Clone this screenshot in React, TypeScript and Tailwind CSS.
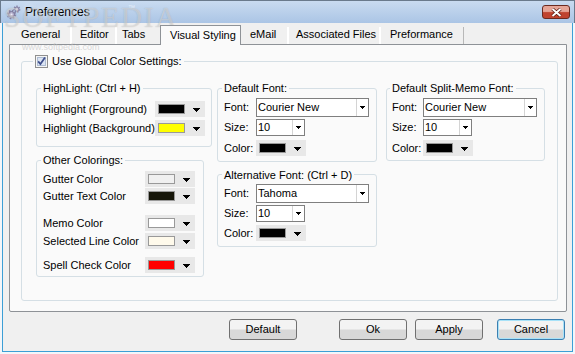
import * as React from "react"

const GROUP = "rounded-[3px] border border-[#d5dfe5]"

const DropArrow = () => (
  <svg width="7" height="4" viewBox="0 0 7 4" className="block">
    <path d="M0 0h7v1h-1v1h-1v1h-1v1h-1v-1h-1v-1h-1v-1h-1z" fill="#000" />
  </svg>
)

const ComboArrow = () => (
  <svg width="5" height="3" viewBox="0 0 5 3" className="block">
    <path d="M0 0h5v1h-1v1h-1v1h-1v-1h-1v-1h-1z" fill="#000" />
  </svg>
)

const ColorPick = ({ swatch }: { swatch: string }) => (
  <div className="flex h-[16px] w-[50px] shrink-0 items-start bg-[#e8e8e8]">
    <div className={`mt-[3px] ml-[3px] h-[10px] w-[27px] border border-[#999999] ${swatch}`} />
    <div className="mt-[7px] ml-[8px]">
      <DropArrow />
    </div>
  </div>
)

const Combo = ({ value, size }: { value: string; size: string }) => (
  <div className={`flex shrink-0 border border-[#7f7f7f] bg-white ${size}`}>
    <span className="flex flex-1 items-center pl-[1px] leading-[13px]">{value}</span>
    <span className="flex w-[12px] items-center justify-center border-l border-[#d4d4d4]">
      <ComboArrow />
    </span>
  </div>
)

type FontBoxProps = {
  title: string
  font: string
  box: string
  label: string
  combo: string
  gaps: [string, string, string]
}

const FontBox = ({ title, font, box, label, combo, gaps }: FontBoxProps) => (
  <fieldset className={`${GROUP} ${box}`}>
    <legend className="px-[2px] leading-[14px]">{title}</legend>
    <div className="pl-[2px]">
      <div className={`flex items-center ${gaps[0]}`}>
        <span className={label}>Font:</span>
        <Combo value={font} size={combo} />
      </div>
      <div className={`flex items-center ${gaps[1]}`}>
        <span className={label}>Size:</span>
        <Combo value="10" size="h-[17px] w-[49px]" />
      </div>
      <div className={`flex items-center ${gaps[2]}`}>
        <span className={label}>Color:</span>
        <ColorPick swatch="bg-black" />
      </div>
    </div>
  </fieldset>
)

const ColorRow = ({ label, swatch, gap, w }: { label: string; swatch: string; gap: string; w: string }) => (
  <div className={`flex items-center ${gap}`}>
    <span className={`${w} leading-[13px]`}>{label}</span>
    <ColorPick swatch={swatch} />
  </div>
)

const Gears = () => (
  <svg width="15" height="15" viewBox="0 0 15 15">
    <circle cx="5.5" cy="9.5" r="3.6" fill="none" stroke="#8a86a8" strokeWidth="2.4" strokeDasharray="1.6 1.2" />
    <circle cx="5.5" cy="9.5" r="3" fill="#b4b0cc" stroke="#6f6b8f" strokeWidth="0.8" />
    <circle cx="5.5" cy="9.5" r="1.1" fill="#eef" />
    <circle cx="10.8" cy="4.2" r="2.6" fill="none" stroke="#8a86a8" strokeWidth="2" strokeDasharray="1.3 1" />
    <circle cx="10.8" cy="4.2" r="2.1" fill="#c4c0da" stroke="#6f6b8f" strokeWidth="0.7" />
    <circle cx="10.8" cy="4.2" r="0.8" fill="#eef" />
  </svg>
)

const tabs = [
  { label: "General", cls: "w-[61px] pl-[12px]" },
  { label: "Editor", cls: "w-[45px] pl-[8px] border-l-2 border-white" },
  { label: "Tabs", cls: "w-[45px] pl-[5px] border-l-2 border-white" },
  { label: "Visual Styling", cls: "", active: true },
  { label: "eMail", cls: "w-[46px] pl-[9px]" },
  { label: "Associated Files", cls: "w-[92px] pl-[7px] border-l-2 border-white" },
  { label: "Preformance", cls: "w-[85px] pl-[9px] border-l-2 border-r border-l-white border-r-[#b8b8b8]" },
]

const Button = ({ label, cls }: { label: string; cls: string }) => (
  <button
    className={`flex h-[21px] w-[68px] items-center justify-center rounded-[3px] border bg-linear-to-b from-[#f3f3f3] from-45% to-[#d8d8d8] to-55% leading-[13px] ${cls}`}
  >
    {label}
  </button>
)

export default function App() {
  return (
    <div className="relative flex h-[354px] w-[575px] flex-col bg-[#f3f6fa] font-['Liberation_Sans',Arial,sans-serif] text-[11px] text-black">
      {/* title bar */}
      <div className="flex h-[23px] shrink-0 items-center border-x border-t border-[#6a7a8c] bg-linear-to-b from-[#c9dbf0] to-[#abc5e5] pr-[4px] pl-[5px]">
        <Gears />
        <span className="ml-[4px] text-[12px] [text-shadow:0_0_6px_#ffffff]">Preferences</span>
        <div className="ml-auto flex h-[14px] w-[28px] items-center justify-center rounded-[3px] border border-[#6b2a20] bg-linear-to-b from-[#e6a597] from-45% to-[#c0432f] to-55%">
          <svg width="11" height="9" viewBox="0 0 11 9">
            <path d="M1.5 1l8 7M9.5 1l-8 7" stroke="#5a1a12" strokeWidth="3.4" />
            <path d="M1.5 1l8 7M9.5 1l-8 7" stroke="#ffffff" strokeWidth="1.9" />
          </svg>
        </div>
      </div>

      {/* body */}
      <div className="mx-[2px] mb-[2px] flex flex-1 flex-col border-x border-b border-[#3c9fd6] bg-[#f0f0f0]">
        <div className="mt-[2px] ml-[6px] w-[558px]">
          {/* tab strip */}
          <div className="flex h-[19px] items-end">
            {tabs.map((t) =>
              t.active ? (
                <div
                  key={t.label}
                  className="relative z-10 -mb-[1px] flex h-[20px] w-[81px] items-center border-x border-t border-[#8e9297] bg-[#fafafa] pb-[1px] pl-[9px]"
                >
                  {t.label}
                </div>
              ) : (
                <div key={t.label} className={`flex h-[17px] items-center pb-[2px] ${t.cls}`}>
                  {t.label}
                </div>
              )
            )}
          </div>

          {/* panel */}
          <div className="h-[268px] rounded-b-[2px] border border-[#8e9297] bg-[#fafafa]">
            <fieldset className={`${GROUP} mt-[9px] ml-[11px] h-[247px] w-[537px] pl-[11px]`}>
              <legend className="flex items-center px-[2px] leading-[14px]">
                <svg width="13" height="13" viewBox="0 0 13 13" className="block">
                  <rect x="0.5" y="0.5" width="12" height="12" fill="#f6f6f6" stroke="#8f8f8f" />
                  <rect x="2.5" y="2.5" width="8" height="8" fill="#dbe4f3" stroke="#aebcd2" />
                  <path d="M3.2 6.4l2.2 2.6 4.6-6.6" stroke="#3f4f8c" strokeWidth="1.7" fill="none" />
                </svg>
                <span className="ml-[4px]">Use Global Color Settings:</span>
              </legend>

              <div className="mt-[13px] ml-[3px] flex items-start">
                {/* column 1 */}
                <div className="flex w-[176px] flex-col">
                  <fieldset className={`${GROUP} w-[176px] pb-[10px] pl-[4px]`}>
                    <legend className="px-[2px] leading-[14px]">HighLight: (Ctrl + H)</legend>
                    <div className="pl-[2px]">
                      <ColorRow label="Highlight (Forground)" swatch="bg-black" gap="mt-[6px]" w="w-[112px]" />
                      <ColorRow label="Highlight (Background)" swatch="bg-[#ffff00]" gap="mt-[3px]" w="w-[112px]" />
                    </div>
                  </fieldset>
                  <fieldset className={`${GROUP} mt-[6px] w-[168px] pb-[3px] pl-[4px]`}>
                    <legend className="px-[2px] leading-[14px]">Other Colorings:</legend>
                    <div className="pl-[2px]">
                      <ColorRow label="Gutter Color" swatch="bg-[#f0f0f0]" gap="mt-[4px]" w="w-[102px]" />
                      <ColorRow label="Gutter Text Color" swatch="bg-[#16160a]" gap="mt-[1px]" w="w-[102px]" />
                      <ColorRow label="Memo Color" swatch="bg-white" gap="mt-[11px]" w="w-[102px]" />
                      <ColorRow label="Selected Line Color" swatch="bg-[#fffaeb]" gap="mt-[2px]" w="w-[102px]" />
                      <ColorRow label="Spell Check Color" swatch="bg-[#ff0000]" gap="mt-[8px]" w="w-[102px]" />
                    </div>
                  </fieldset>
                </div>

                {/* column 2 */}
                <div className="ml-[5px] flex w-[160px] flex-col">
                  <FontBox
                    title="Default Font:"
                    font="Courier New"
                    box="w-[160px] pb-[4px] pl-[4px]"
                    label="w-[32px]"
                    combo="h-[19px] w-[113px]"
                    gaps={["mt-[3px]", "mt-[2px]", "mt-[4px]"]}
                  />
                  <div className="mt-[6px]">
                    <FontBox
                      title="Alternative Font: (Ctrl + D)"
                      font="Tahoma"
                      box="w-[160px] pb-[5px] pl-[4px]"
                      label="w-[32px]"
                      combo="h-[19px] w-[113px]"
                      gaps={["mt-[2px]", "mt-[2px]", "mt-[3px]"]}
                    />
                  </div>
                </div>

                {/* column 3 */}
                <div className="ml-[9px] w-[159px]">
                  <FontBox
                    title="Default Split-Memo Font:"
                    font="Courier New"
                    box="w-[159px] pb-[3px] pl-[3px]"
                    label="w-[31px]"
                    combo="h-[19px] w-[114px]"
                    gaps={["mt-[3px]", "mt-[2px]", "mt-[4px]"]}
                  />
                </div>
              </div>
            </fieldset>
          </div>
        </div>

        {/* buttons */}
        <div className="mt-[7px] flex">
          <div className="ml-[226px]">
            <Button label="Default" cls="border-[#707070]" />
          </div>
          <div className="ml-[42px]">
            <Button label="Ok" cls="border-[#707070]" />
          </div>
          <div className="ml-[8px]">
            <Button label="Apply" cls="border-[#707070]" />
          </div>
          <div className="ml-[14px]">
            <Button label="Cancel" cls="border-[#3c7fb1] shadow-[inset_0_0_0_1px_#a8e2f8]" />
          </div>
        </div>
      </div>

      {/* watermark */}
      <div className="pointer-events-none absolute top-[2px] left-[4px] font-['Liberation_Serif',serif] text-[29px] leading-[30px] tracking-[2px] text-white/40 [text-shadow:0_0_1px_rgba(90,90,90,0.35)]">
        SOFTPEDIA
      </div>
      <div className="pointer-events-none absolute top-[3px] left-[128px] text-[7px] text-white/60">™</div>
      <div className="pointer-events-none absolute top-[41px] left-[22px] text-[9px] text-[#c8c8c8]/70">
        www.softpedia.com
      </div>
    </div>
  )
}
